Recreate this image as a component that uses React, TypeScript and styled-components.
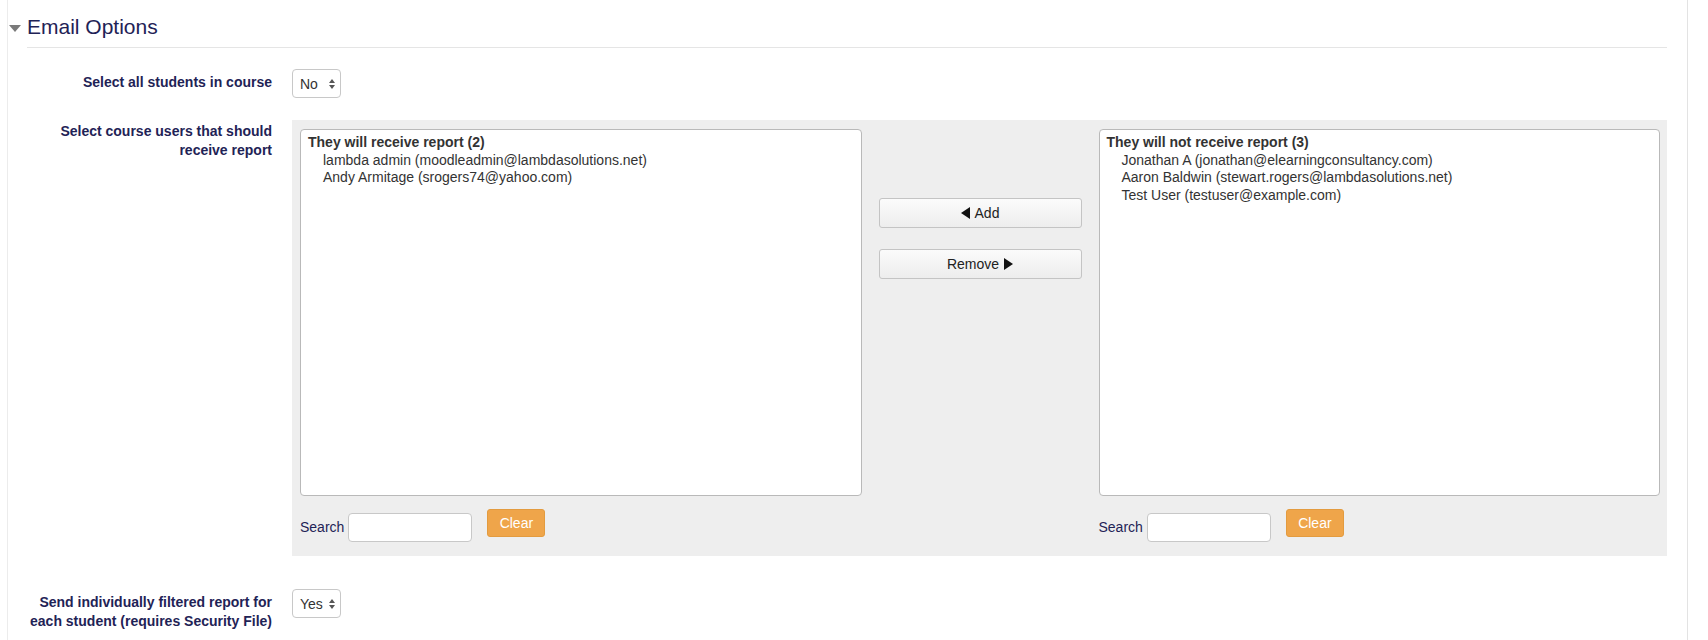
import React from "react";
import styled, { createGlobalStyle } from "styled-components";

const GlobalStyle = createGlobalStyle`
  html, body { margin: 0; padding: 0; background: #fff; }
  body { font-family: "Liberation Sans", Arial, Helvetica, sans-serif; font-size: 14px; color: #333; }
  * { box-sizing: border-box; }
`;

const NAVY = "#1f2356";

const Page = styled.div`
  margin-left: 7px;
  width: 1681px;
  min-height: 640px;
  border-left: 1px solid #ececec;
  border-right: 1px solid #e3e3e3;
`;

const Fieldset = styled.section`
  margin: 0 20px 0 19px;
`;

const Legend = styled.div`
  display: flex;
  align-items: center;
  padding: 14px 0 7px;
  border-bottom: 1px solid #e5e5e5;
`;

const Toggle = styled.svg`
  width: 12px;
  height: 7px;
  margin-left: -18px;
  margin-right: 6px;
  margin-top: 2px;
  fill: #7a7a7a;
`;

const Title = styled.h3`
  margin: 0;
  font-size: 21px;
  line-height: 26px;
  font-weight: 400;
  color: ${NAVY};
`;

const FormRow = styled.div<{ $top: number }>`
  display: grid;
  grid-template-columns: 245px 1fr;
  column-gap: 20px;
  margin-top: ${(p) => p.$top}px;
  align-items: start;
`;

const Label = styled.div<{ $pad: number }>`
  text-align: right;
  font-weight: 700;
  font-size: 14px;
  line-height: 19px;
  color: ${NAVY};
  padding-top: ${(p) => p.$pad}px;
`;

const SelectBox = styled.div`
  display: inline-flex;
  align-items: center;
  justify-content: space-between;
  width: 49px;
  height: 29px;
  padding: 0 5px 0 7px;
  border: 1px solid #c8c8c8;
  border-radius: 4px;
  background: #fff;
  font-size: 14px;
  color: #333;
  justify-self: start;
`;

const Arrows = styled.svg`
  width: 6px;
  height: 10px;
  fill: #555;
`;

const Panel = styled.div`
  background: #eeeeee;
  padding: 9px 7px 14px 8px;
  display: grid;
  grid-template-columns: 1fr 237px 1fr;
`;

const Side = styled.div`
  display: flex;
  flex-direction: column;
`;

const ListBox = styled.div`
  height: 367px;
  background: #fff;
  border: 1px solid #b9b9b9;
  border-radius: 4px;
  padding: 4px 7px;
  font-size: 14px;
  line-height: 17.5px;
  color: #333;
`;

const GroupHead = styled.div`
  font-weight: 700;
`;

const Option = styled.div`
  padding-left: 15px;
`;

const SearchRow = styled.div`
  display: flex;
  align-items: flex-start;
  margin-top: 13px;
`;

const SearchLabel = styled.span`
  font-size: 14px;
  line-height: 29px;
  margin-top: 4px;
  color: ${NAVY};
  margin-right: 4px;
`;

const SearchInput = styled.div`
  width: 124px;
  height: 29px;
  margin-top: 4px;
  border: 1px solid #c8c8c8;
  border-radius: 4px;
  background: #fff;
`;

const ClearButton = styled.button`
  margin-left: 15px;
  width: 58px;
  height: 28px;
  border: 1px solid #e39b3f;
  border-radius: 3px;
  background: #efa54a;
  color: #fff;
  font-family: inherit;
  font-size: 14px;
  padding: 0;
`;

const Middle = styled.div`
  display: flex;
  flex-direction: column;
  gap: 21px;
  padding: 69px 17px 0;
`;

const MoveButton = styled.button`
  display: flex;
  align-items: center;
  justify-content: center;
  gap: 5px;
  height: 30px;
  width: 100%;
  border: 1px solid #c4c4c4;
  border-radius: 3px;
  background: linear-gradient(#fbfbfb, #ededed);
  color: #222;
  font-family: inherit;
  font-size: 14px;
  padding: 0;
`;

const Tri = styled.svg`
  width: 9px;
  height: 12px;
  fill: #111;
`;

const Select = ({ value }: { value: string }) => (
  <SelectBox>
    <span>{value}</span>
    <Arrows viewBox="0 0 6 10">
      <path d="M3 0 L6 4 L0 4 Z" />
      <path d="M0 6 L6 6 L3 10 Z" />
    </Arrows>
  </SelectBox>
);

const UserList = ({ title, users }: { title: string; users: string[] }) => (
  <Side>
    <ListBox>
      <GroupHead>{title}</GroupHead>
      {users.map((u) => (
        <Option key={u}>{u}</Option>
      ))}
    </ListBox>
    <SearchRow>
      <SearchLabel>Search</SearchLabel>
      <SearchInput />
      <ClearButton>Clear</ClearButton>
    </SearchRow>
  </Side>
);

export default function App() {
  return (
    <>
      <GlobalStyle />
      <Page>
        <Fieldset>
          <Legend>
            <Toggle viewBox="0 0 12 7">
              <path d="M0 0 L12 0 L6 7 Z" />
            </Toggle>
            <Title>Email Options</Title>
          </Legend>

          <FormRow $top={21}>
            <Label $pad={4}>Select all students in course</Label>
            <Select value="No" />
          </FormRow>

          <FormRow $top={22}>
            <Label $pad={2}>Select course users that should receive report</Label>
            <Panel>
              <UserList
                title="They will receive report (2)"
                users={[
                  "lambda admin (moodleadmin@lambdasolutions.net)",
                  "Andy Armitage (srogers74@yahoo.com)",
                ]}
              />
              <Middle>
                <MoveButton>
                  <Tri viewBox="0 0 9 12">
                    <path d="M9 0 L9 12 L0 6 Z" />
                  </Tri>
                  Add
                </MoveButton>
                <MoveButton>
                  Remove
                  <Tri viewBox="0 0 9 12">
                    <path d="M0 0 L9 6 L0 12 Z" />
                  </Tri>
                </MoveButton>
              </Middle>
              <UserList
                title="They will not receive report (3)"
                users={[
                  "Jonathan A (jonathan@elearningconsultancy.com)",
                  "Aaron Baldwin (stewart.rogers@lambdasolutions.net)",
                  "Test User (testuser@example.com)",
                ]}
              />
            </Panel>
          </FormRow>

          <FormRow $top={33}>
            <Label $pad={4}>Send individually filtered report for each student (requires Security File)</Label>
            <Select value="Yes" />
          </FormRow>
        </Fieldset>
      </Page>
    </>
  );
}
